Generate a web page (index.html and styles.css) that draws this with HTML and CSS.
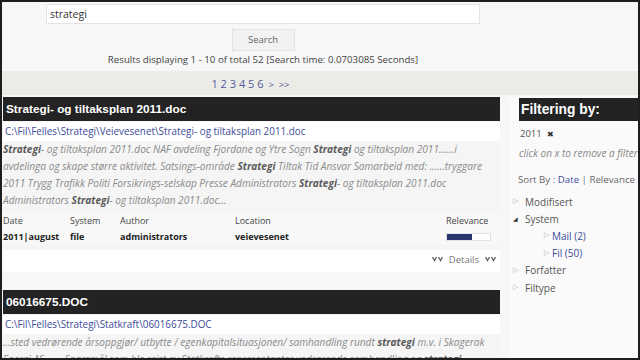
FILE: index.html
```html
<!DOCTYPE html>
<html>
<head>
<meta charset="utf-8">
<link rel="stylesheet" href="styles.css">
</head>
<body>
<div class="frame">
  <div class="top">
    <div class="query">strategi</div>
    <div class="btn">Search</div>
    <div class="stats">Results displaying 1 - 10 of total 52 [Search time: 0.0703085 Seconds]</div>
  </div>
  <div class="band">
    <div class="pager"><a>1</a> <a>2</a> <a>3</a> <a>4</a> <a>5</a> <a>6</a> <a class="nx">&gt;</a> <a class="nx">&gt;&gt;</a></div>
  </div>
  <div class="cols">
    <div class="main">
      <div class="result">
        <div class="rhead">Strategi- og tiltaksplan 2011.doc</div>
        <div class="rpath">C:\Fil\Felles\Strategi\Veievesenet\Strategi- og tiltaksplan 2011.doc</div>
        <div class="snip">
          <div><b>Strategi</b>- og tiltaksplan 2011.doc NAF avdeling Fjordane og Ytre Sogn <b>Strategi</b> og tiltaksplan 2011......i</div>
          <div>avdelinga og skape større aktivitet. Satsings-område <b>Strategi</b> Tiltak Tid Ansvar Samarbeid med: ......tryggare</div>
          <div>2011 Trygg Trafikk Politi Forsikrings-selskap Presse Administrators <b>Strategi</b>- og tiltaksplan 2011.doc</div>
          <div>Administrators <b>Strategi</b>- og tiltaksplan 2011.doc...</div>
        </div>
        <div class="meta">
          <span class="mh">Date</span><span class="mh">System</span><span class="mh">Author</span><span class="mh">Location</span><span class="mh">Relevance</span>
          <span class="mv">2011|august</span><span class="mv">file</span><span class="mv">administrators</span><span class="mv">veievesenet</span><span class="mv"><span class="rel"><span class="relfill" style="width:58%"></span></span></span>
        </div>
        <div class="details">
          <svg class="chev" width="11" height="6" viewBox="0 0 11 6"><polyline points="0.5,1 2.5,4.5 4.5,1" /><polyline points="6.5,1 8.5,4.5 10.5,1" /></svg>
          <span>Details</span>
          <svg class="chev" width="11" height="6" viewBox="0 0 11 6"><polyline points="0.5,1 2.5,4.5 4.5,1" /><polyline points="6.5,1 8.5,4.5 10.5,1" /></svg>
        </div>
      </div>
      <div class="result">
        <div class="rhead">06016675.DOC</div>
        <div class="rpath">C:\Fil\Felles\Strategi\Statkraft\06016675.DOC</div>
        <div class="snip">
          <div>...sted vedrørende årsoppgjør/ utbytte / egenkapitalsituasjonen/ samhandling rundt <b>strategi</b> m.v. i Skagerak</div>
          <div>Energi AS ...... Spørsmål som ble reist av Statkrafts representanter vedrørende samhandling og <b>strategi</b></div>
        </div>
      </div>
    </div>
    <div class="side">
      <div class="shead">Filtering by:</div>
      <div class="chip">2011 <span class="x">✖</span></div>
      <div class="hint">click on x to remove a filter</div>
      <div class="sort">Sort By : <a>Date</a> | Relevance</div>
      <ul class="tree">
        <li><span class="tri">▷</span>Modifisert</li>
        <li><span class="tri open">◢</span>System</li>
        <li class="sub lnk"><span class="tri">▷</span>Mail (2)</li>
        <li class="sub lnk"><span class="tri">▷</span>Fil (50)</li>
        <li><span class="tri">▷</span>Forfatter</li>
        <li><span class="tri">▷</span>Filtype</li>
      </ul>
    </div>
  </div>
</div>
</body>
</html>
```
FILE: styles.css
```css
html, body {
  margin: 0;
  padding: 0;
}
body {
  width: 640px;
  height: 360px;
  overflow: hidden;
  font-family: "Open Sans", "Noto Sans", sans-serif;
  color: #555;
}
.frame {
  box-sizing: border-box;
  width: 640px;
  height: 360px;
  border: 2px solid #1e1e1e;
  background: #f7f7f7;
  overflow: hidden;
  display: flex;
  flex-direction: column;
}
.top {
  width: 522px;
  display: flex;
  flex-direction: column;
  align-items: center;
  height: 69px;
  flex: none;
}
.query {
  box-sizing: border-box;
  margin-top: 2px;
  width: 434px;
  height: 20px;
  background: #fff;
  border: 1px solid #e4e4e4;
  font-size: 10.5px;
  line-height: 18px;
  padding-left: 3px;
  color: #333;
}
.btn {
  box-sizing: border-box;
  margin-top: 5px;
  width: 63px;
  height: 22px;
  background: #f2f2f2;
  border: 1px solid #e2e2e2;
  font-size: 9.5px;
  line-height: 20px;
  text-align: center;
  color: #666;
}
.stats {
  margin-top: 2px;
  font-size: 9.7px;
  line-height: 13px;
  color: #444;
  white-space: nowrap;
}
.band {
  flex: none;
  height: 24px;
  background: #ecebe8;
}
.pager {
  width: 497px;
  text-align: center;
  font-size: 11px;
  line-height: 26px;
  color: #4f5b9a;
}
.pager a { color: #4f5b9a; }
.pager .nx { font-size: 9.5px; margin-left: 2px; }
.cols {
  flex: 1;
  display: flex;
  margin-top: 2px;
  gap: 10px;
  min-height: 0;
}
.main {
  width: 497px;
  flex: none;
  margin-left: 1px;
  display: flex;
  flex-direction: column;
  gap: 18px;
}
.result {
  background: #f5f5f5;
}
.rhead {
  height: 24px;
  background: #232323;
  color: #fff;
  font-family: "Liberation Sans", Arial, sans-serif;
  font-weight: bold;
  font-size: 11.8px;
  line-height: 24px;
  padding-left: 3px;
}
.rpath {
  background: #fff;
  height: 19px;
  margin-top: 1px;
  font-size: 9.9px;
  line-height: 19px;
  padding-left: 2px;
  color: #3c4c9a;
  white-space: nowrap;
}
.snip {
  font-size: 10.1px;
  line-height: 17px;
  font-style: italic;
  color: #8a8a8a;
  white-space: nowrap;
}
.snip b { color: #5a5a5a; }
.meta {
  margin-top: 4px;
  display: grid;
  grid-template-columns: 67px 50px 115px 211px 54px;
  font-size: 9px;
  line-height: 16px;
  color: #444;
  background: #f8f8f8;
}
.mv { font-weight: bold; color: #222; display: flex; align-items: center; }
.rel {
  display: block;
  box-sizing: border-box;
  width: 45px;
  height: 8px;
  background: #fff;
  border: 1px solid #e2e2e2;
}
.relfill {
  display: block;
  height: 100%;
  background: #2a3570;
}
.details {
  background: #fff;
  margin-top: 5px;
  height: 22px;
  display: flex;
  justify-content: flex-end;
  align-items: center;
  gap: 6px;
  padding-right: 4px;
  padding-bottom: 4px;
  font-size: 9.5px;
  color: #777;
  box-sizing: border-box;
}
.chev polyline {
  fill: none;
  stroke: #666;
  stroke-width: 1.4;
}
.side {
  flex: 1;
  min-width: 0;
  background: #fafafa;
  white-space: nowrap;
}
.shead {
  height: 23px;
  margin-top: 1px;
  margin-left: 9px;
  background: #232323;
  color: #fff;
  font-family: "Liberation Sans", Arial, sans-serif;
  font-weight: bold;
  font-size: 13.8px;
  line-height: 23px;
  padding-left: 2px;
}
.chip {
  margin-top: 4px;
  font-size: 9.5px;
  line-height: 18px;
  padding-left: 10px;
  color: #555;
}
.chip .x { font-size: 8px; color: #333; margin-left: 3px; }
.hint {
  font-size: 10px;
  line-height: 20px;
  font-style: italic;
  color: #888;
  padding-left: 9px;
}
.sort {
  margin-top: 8px;
  font-size: 9.7px;
  line-height: 17px;
  color: #666;
  padding-left: 8px;
}
.sort a { color: #3c4c9a; }
.tree {
  list-style: none;
  margin: 5px 0 0 0;
  padding: 0 0 0 3px;
  font-size: 10px;
  color: #555;
}
.tree li {
  display: flex;
  align-items: center;
  height: 17.2px;
}
.tree .sub { padding-left: 31px; }
.tree .lnk { color: #3c4c9a; }
.tri {
  font-family: "DejaVu Sans", sans-serif;
  font-size: 7px;
  line-height: 1;
  color: #aaa;
  width: 12px;
  flex: none;
}
.tree .sub .tri { width: 8px; }
.tri.open { color: #333; font-size: 6px; }
```
